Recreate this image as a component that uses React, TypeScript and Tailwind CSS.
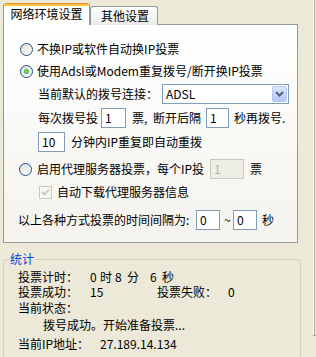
import React from "react";

const Radio = ({ checked }: { checked?: boolean }) => (
  <span className="flex h-[13px] w-[13px] shrink-0 items-center justify-center rounded-full border border-[#1c5180] bg-linear-to-br from-[#dcdcd7] to-white">
    {checked && (
      <span className="h-[5px] w-[5px] rounded-full bg-radial from-[#7fe07f] to-[#21a121]" />
    )}
  </span>
);

const Field = ({
  value,
  width,
  disabled,
}: {
  value: string;
  width: string;
  disabled?: boolean;
}) => (
  <div
    className={`flex h-[20px] shrink-0 items-center pl-[3px] text-[12px] leading-[12px] ${width} ${
      disabled
        ? "border border-[#c9c7ba] bg-[#efeee6] text-[#b7b5a8]"
        : "border border-[#7f9db9] bg-white text-black"
    }`}
  >
    {value}
  </div>
);

const Row = ({ children, className }: { children: React.ReactNode; className?: string }) => (
  <div className={`flex h-[20px] items-center whitespace-pre ${className ?? ""}`}>{children}</div>
);

const App = () => {
  return (
    <div className="relative flex h-[357px] w-[316px] overflow-hidden bg-[#ece9d8] font-['Noto_Sans_CJK_SC','Noto_Sans',sans-serif] text-[12px] leading-[12px] text-black">
      <div className="w-[312px] shrink-0 pl-[3px] pt-[3px]">
        {/* tabs */}
        <div className="flex h-[22px] items-end">
          <div className="relative z-10 flex h-[22px] w-[87px] flex-col overflow-hidden rounded-t-[3px] border-x border-[#919b9c] bg-white">
            <div className="h-[1px] bg-[#e68b2c]" />
            <div className="h-[2px] bg-[#ffc73c]" />
            <div className="flex flex-1 items-center justify-center pb-[3px]">网络环境设置</div>
          </div>
          <div className="flex h-[19px] w-[68px] items-center justify-center rounded-t-[3px] border-x border-t border-[#919b9c] bg-linear-to-b from-white to-[#ecebe6] pl-[2px]">
            其他设置
          </div>
        </div>

        {/* panel */}
        <div className="-mt-px flex h-[219px] w-[295px] flex-col border border-[#919b9c] bg-linear-to-b from-white to-[#f4f3ee] pt-[14px]">
          <Row className="gap-[4px] pl-[16px]">
            <Radio />
            <span>不换IP或软件自动换IP投票</span>
          </Row>
          <Row className="mt-[2px] gap-[4px] pl-[16px]">
            <Radio checked />
            <span>使用Adsl或Modem重复拨号/断开换IP投票</span>
          </Row>
          <Row className="mt-[3px] pl-[34px]">
            <span className="w-[124px]">当前默认的拨号连接：</span>
            <div className="flex h-[20px] w-[127px] items-center justify-between border border-[#7f9db9] bg-white pl-[3px] pr-px">
              <span>ADSL</span>
              <span className="flex h-[16px] w-[15px] items-center justify-center rounded-[2px] border border-[#b4c8f6] bg-linear-to-b from-[#dce6fd] to-[#b4c8f6]">
                <svg width="9" height="6" viewBox="0 0 9 6">
                  <path d="M1 1 L4.5 4.5 L8 1" fill="none" stroke="#4d6185" strokeWidth="2" />
                </svg>
              </span>
            </div>
          </Row>
          <Row className="mt-[4px] pl-[34px]">
            <span className="w-[63px]">每次拨号投</span>
            <Field value="1" width="w-[25px]" />
            <span className="ml-[6px] w-[21px]">票,</span>
            <span className="w-[53px]">断开后隔</span>
            <Field value="1" width="w-[23px]" />
            <span className="ml-[5px]">秒再拨号.</span>
          </Row>
          <Row className="mt-[4px] pl-[34px]">
            <Field value="10" width="w-[27px]" />
            <span className="ml-[6px]">分钟内IP重复即自动重拨</span>
          </Row>
          <Row className="mt-[7px] gap-[5px] pl-[15px]">
            <Radio />
            <span className="w-[168px]">启用代理服务器投票，每个IP投</span>
            <Field value="1" width="w-[34px]" disabled />
            <span className="ml-[1px]">票</span>
          </Row>
          <Row className="mt-[3px] gap-[5px] pl-[35px]">
            <span className="flex h-[13px] w-[13px] items-center justify-center border border-[#cac8bb] bg-[#f7f7f2]">
              <svg width="9" height="8" viewBox="0 0 9 8">
                <path d="M1 4 L3.5 6.5 L8 1.5" fill="none" stroke="#cac8bb" strokeWidth="1.8" />
              </svg>
            </span>
            <span>自动下载代理服务器信息</span>
          </Row>
          <Row className="mt-[8px] pl-[14px]">
            <span className="w-[178px]">以上各种方式投票的时间间隔为:</span>
            <Field value="0" width="w-[24px]" />
            <span className="ml-[4px] w-[9px]">~</span>
            <Field value="0" width="w-[24px]" />
            <span className="ml-[5px]">秒</span>
          </Row>
        </div>

        {/* 统计 group */}
        <div className="relative mt-[16px] h-[110px] w-[298px] rounded-[3px] border border-[#d0d0bf] pl-[14px] pt-[10px]">
          <span className="absolute -top-[7px] left-[5px] bg-[#ece9d8] px-[1px] text-[#0046d5]">统计</span>
          <div className="flex h-[14px] items-center whitespace-pre">
            <span className="w-[72px]">投票计时：</span>
            <span className="w-[10px]">0</span>
            <span className="w-[15px]">时</span>
            <span className="w-[12px]">8</span>
            <span className="w-[23px]">分</span>
            <span className="w-[12px]">6</span>
            <span>秒</span>
          </div>
          <div className="mt-[1px] flex h-[14px] items-center whitespace-pre">
            <span className="w-[72px]">投票成功：</span>
            <span className="w-[67px]">15</span>
            <span className="w-[71px]">投票失败：</span>
            <span>0</span>
          </div>
          <div className="mt-[2px] flex h-[14px] items-center">当前状态：</div>
          <div className="mt-[3px] flex h-[14px] items-center pl-[25px]">拨号成功。开始准备投票...</div>
          <div className="mt-[5px] flex h-[14px] items-center whitespace-pre">
            <span className="w-[82px]">当前IP地址：</span>
            <span>27.189.14.134</span>
          </div>
        </div>
      </div>

      {/* neighbouring pane edge */}
      <div className="ml-[1px] flex flex-col">
        <div className="h-[335px] w-[2px] border-l border-r border-l-white border-r-[#aca899]" />
        <div className="h-px w-[3px] bg-[#aca899]" />
      </div>
    </div>
  );
};

export default App;
